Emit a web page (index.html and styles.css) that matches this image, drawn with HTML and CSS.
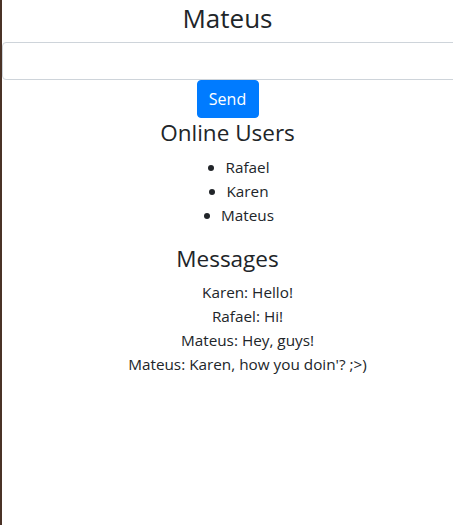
FILE: index.html
```html
<!DOCTYPE html>
<html lang="en">
<head>
<meta charset="utf-8">
<title>Chat</title>
<link rel="stylesheet" href="styles.css">
</head>
<body>
<div class="page">
  <h1 class="title">Mateus</h1>
  <form class="send-form">
    <input class="message-input" type="text" aria-label="Message">
    <button class="send-btn" type="button">Send</button>
  </form>
  <h4 class="section-title">Online Users</h4>
  <ul class="users">
    <li><span class="user">Rafael</span></li>
    <li><span class="user">Karen</span></li>
    <li><span class="user">Mateus</span></li>
  </ul>
  <h4 class="section-title messages-title">Messages</h4>
  <ul class="messages">
    <li>Karen: Hello!</li>
    <li>Rafael: Hi!</li>
    <li>Mateus: Hey, guys!</li>
    <li>Mateus: Karen, how you doin'? ;&gt;)</li>
  </ul>
</div>
</body>
</html>
```

FILE: styles.css
```css
html, body {
  margin: 0;
  padding: 0;
  background: #fff;
}
body {
  font-family: "Open Sans", "Noto Sans", sans-serif;
  font-size: 15.3px;
  color: #212529;
  overflow: hidden;
}
.page {
  border-left: 2px solid #4a3226;
  min-height: 525px;
  box-sizing: border-box;
  overflow: hidden;
  text-align: center;
}
.title {
  font-size: 26px;
  font-weight: 400;
  line-height: 32px;
  padding-top: 2px;
  margin: 0 0 8px;
}
.send-form {
  margin: 0;
}
.message-input {
  display: block;
  box-sizing: border-box;
  width: calc(100% + 10px);
  height: 38px;
  margin: 0;
  border: 1px solid #ced4da;
  border-radius: 4px;
  padding: 6px 12px;
  font: inherit;
  background: #fff;
}
.send-btn {
  display: block;
  margin: 0 auto;
  height: 38px;
  width: 62px;
  padding: 0;
  border: 1px solid #007bff;
  border-radius: 4px;
  background: #007bff;
  color: #fff;
  font: inherit;
  font-size: 16px;
  line-height: 24px;
}
.section-title {
  font-size: 22.5px;
  font-weight: 400;
  line-height: 28px;
  margin: 1px 0 8px;
}
.messages-title {
  margin-top: 18px;
  margin-bottom: 7px;
}
.users, .messages {
  margin: 0;
  padding-left: 40px;
  line-height: 24px;
  list-style: none;
}
.messages {
  margin-top: 1px;
}
.user {
  position: relative;
}
.user::before {
  content: "";
  position: absolute;
  left: -17px;
  top: 50%;
  width: 6px;
  height: 6px;
  margin-top: -2px;
  border-radius: 50%;
  background: #212529;
}
```
